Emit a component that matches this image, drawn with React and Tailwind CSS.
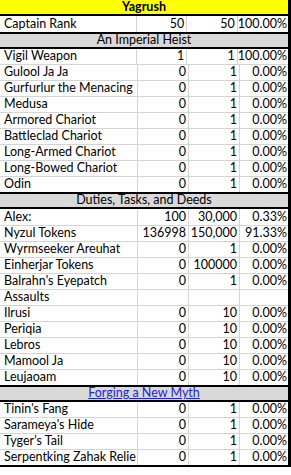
import React from "react";

const rows = [
  { type: "title", label: "Yagrush", h: "h-[16px]" },
  { label: "Captain Rank", a: "50", b: "50", p: "100.00%", h: "h-[16px]" },
  { type: "section", label: "An Imperial Heist" },
  { label: "Vigil Weapon", a: "1", b: "1", p: "100.00%" },
  { label: "Gulool Ja Ja", a: "0", b: "1", p: "0.00%" },
  { label: "Gurfurlur the Menacing", a: "0", b: "1", p: "0.00%" },
  { label: "Medusa", a: "0", b: "1", p: "0.00%" },
  { label: "Armored Chariot", a: "0", b: "1", p: "0.00%" },
  { label: "Battleclad Chariot", a: "0", b: "1", p: "0.00%" },
  { label: "Long-Armed Chariot", a: "0", b: "1", p: "0.00%" },
  { label: "Long-Bowed Chariot", a: "0", b: "1", p: "0.00%" },
  { label: "Odin", a: "0", b: "1", p: "0.00%" },
  { type: "section", label: "Duties, Tasks, and Deeds" },
  { label: "Alex:", a: "100", b: "30,000", p: "0.33%", h: "h-[16px]" },
  { label: "Nyzul Tokens", a: "136998", b: "150,000", p: "91.33%" },
  { label: "Wyrmseeker Areuhat", a: "0", b: "1", p: "0.00%" },
  { label: "Einherjar Tokens", a: "0", b: "100000", p: "0.00%" },
  { label: "Balrahn's Eyepatch", a: "0", b: "1", p: "0.00%" },
  { label: "Assaults", a: "", b: "", p: "" },
  { label: "Ilrusi", a: "0", b: "10", p: "0.00%" },
  { label: "Periqia", a: "0", b: "10", p: "0.00%" },
  { label: "Lebros", a: "0", b: "10", p: "0.00%" },
  { label: "Mamool Ja", a: "0", b: "10", p: "0.00%" },
  { label: "Leujaoam", a: "0", b: "10", p: "0.00%" },
  { type: "link", label: "Forging a New Myth" },
  { label: "Tinin's Fang", a: "0", b: "1", p: "0.00%" },
  { label: "Sarameya's Hide", a: "0", b: "1", p: "0.00%" },
  { label: "Tyger's Tail", a: "0", b: "1", p: "0.00%" },
  { label: "Serpentking Zahak Relie", a: "0", b: "1", p: "0.00%" },
];

function Row({ row, thick }) {
  const edge = thick ? "border-b-2 border-black" : "border-b border-[#d4d4d4]";
  const h = row.h || "h-[15px]";

  if (row.type === "title") {
    return (
      <div className={`${edge} ${h} bg-[#ffff00] flex items-center justify-center font-bold`}>
        {row.label}
      </div>
    );
  }

  if (row.type === "section" || row.type === "link") {
    return (
      <div className={`${edge} ${h} bg-[#d9d9d9] flex items-center justify-center`}>
        {row.type === "link" ? (
          <span className="text-[#2222dd] underline underline-offset-1">{row.label}</span>
        ) : (
          row.label
        )}
      </div>
    );
  }

  return (
    <div className={`${edge} flex`}>
      <div className={`${h} w-[138px] border-r border-[#d4d4d4] pl-[4px] flex items-center overflow-hidden whitespace-nowrap`}>
        {row.label}
      </div>
      <div className={`${h} w-[51px] border-r border-[#d4d4d4] pr-[2px] flex items-center justify-end`}>
        {row.a}
      </div>
      <div className={`${h} w-[51px] border-r border-[#d4d4d4] pr-[2px] flex items-center justify-end`}>
        {row.b}
      </div>
      <div className={`${h} flex-1 pr-[1px] flex items-center justify-end`}>{row.p}</div>
    </div>
  );
}

export default function App() {
  return (
    <div className="w-[291px] h-[475px] bg-white overflow-hidden">
      <div
        className="w-[291px] border-r-[3px] border-black text-[12.5px] leading-none text-black"
        style={{ fontFamily: "Lato, 'Open Sans', sans-serif" }}
      >
        {rows.map((row, i) => {
          const next = rows[i + 1];
          const thick = !next || row.type || next.type;
          return <Row key={i} row={row} thick={!!thick} />;
        })}
      </div>
    </div>
  );
}
